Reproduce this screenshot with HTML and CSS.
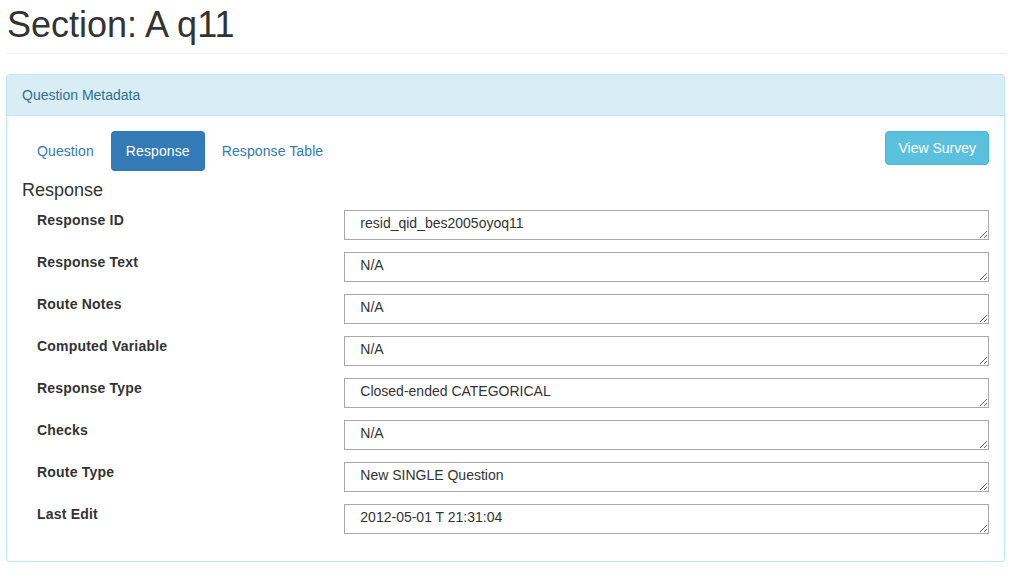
FILE: index.html
```html
<!DOCTYPE html>
<html>
<head>
<meta charset="utf-8">
<title>Section: A q11</title>
<link rel="stylesheet" href="styles.css">
</head>
<body>
<div class="container">
  <div class="page-header">
    <h1>Section: A q11</h1>
  </div>
  <div class="panel">
    <div class="panel-heading">Question Metadata</div>
    <div class="panel-body">
      <div class="toolbar">
        <ul class="pills">
          <li><a class="pill">Question</a></li>
          <li><a class="pill active">Response</a></li>
          <li><a class="pill">Response Table</a></li>
        </ul>
        <button class="btn-info">View Survey</button>
      </div>
      <h4 class="section-title">Response</h4>
      <div class="fields">
        <div class="field"><label class="field-label">Response ID</label><textarea class="field-input" rows="1" readonly>resid_qid_bes2005oyoq11</textarea></div>
        <div class="field"><label class="field-label">Response Text</label><textarea class="field-input" rows="1" readonly>N/A</textarea></div>
        <div class="field"><label class="field-label">Route Notes</label><textarea class="field-input" rows="1" readonly>N/A</textarea></div>
        <div class="field"><label class="field-label">Computed Variable</label><textarea class="field-input" rows="1" readonly>N/A</textarea></div>
        <div class="field"><label class="field-label">Response Type</label><textarea class="field-input" rows="1" readonly>Closed-ended CATEGORICAL</textarea></div>
        <div class="field"><label class="field-label">Checks</label><textarea class="field-input" rows="1" readonly>N/A</textarea></div>
        <div class="field"><label class="field-label">Route Type</label><textarea class="field-input" rows="1" readonly>New SINGLE Question</textarea></div>
        <div class="field"><label class="field-label">Last Edit</label><textarea class="field-input" rows="1" readonly>2012-05-01 T 21:31:04</textarea></div>
      </div>
    </div>
  </div>
</div>
</body>
</html>
```
FILE: styles.css
```css
* {
  box-sizing: border-box;
}

html, body {
  margin: 0;
  padding: 0;
  background: #fff;
}

body {
  font-family: "Liberation Sans", Arial, Helvetica, sans-serif;
  font-size: 14px;
  line-height: 20px;
  color: #333;
}

.container {
  padding: 0 15px 0 6px;
}

.page-header {
  padding-bottom: 8px;
  border-bottom: 1px solid #eee;
  margin: 0 0 20px 1px;
}

.page-header h1 {
  margin: 5px 0 0 0;
  font-size: 36px;
  line-height: 39.6px;
  font-weight: 500;
  color: #333;
}

.panel {
  border: 1px solid #bce8f1;
  border-radius: 4px;
  background: #fff;
  box-shadow: 0 1px 1px rgba(0, 0, 0, 0.05);
}

.panel-heading {
  background: #d9edf7;
  color: #31708f;
  padding: 10px 15px;
  border-bottom: 1px solid #bce8f1;
  border-radius: 3px 3px 0 0;
}

.panel-body {
  padding: 15px;
}

.toolbar {
  display: flex;
  justify-content: space-between;
  align-items: flex-start;
}

.pills {
  list-style: none;
  margin: 0;
  padding: 0;
  display: flex;
  gap: 2px;
}

.pill {
  display: block;
  padding: 10px 15px;
  border-radius: 4px;
  color: #337ab7;
  text-decoration: none;
  cursor: pointer;
  letter-spacing: 0.1px;
}

.pill.active {
  background: #337ab7;
  color: #fff;
}

.btn-info {
  font-family: inherit;
  font-size: 14px;
  line-height: 20px;
  padding: 6px 12px;
  color: #fff;
  background: #5bc0de;
  border: 1px solid #46b8da;
  border-radius: 4px;
  cursor: pointer;
}

.section-title {
  margin: 10px 0 10px 0;
  font-size: 18px;
  line-height: 19.8px;
  font-weight: 500;
  color: #333;
}

.fields {
  display: flex;
  flex-direction: column;
  gap: 12px;
  padding-bottom: 12px;
}

.field {
  display: grid;
  grid-template-columns: 1fr 2fr;
  align-items: start;
}

.field-label {
  padding-left: 15px;
  font-weight: bold;
  line-height: 20px;
  letter-spacing: 0.2px;
}

.field-input {
  display: block;
  width: 100%;
  height: 30px;
  margin: 0;
  padding: 2px 15px;
  font-family: "Liberation Sans", Arial, Helvetica, sans-serif;
  font-size: 14px;
  line-height: 20px;
  color: #333;
  border: 1px solid #a9a9a9;
  border-radius: 0;
  background: #fff;
  resize: vertical;
  overflow: hidden;
}
```
